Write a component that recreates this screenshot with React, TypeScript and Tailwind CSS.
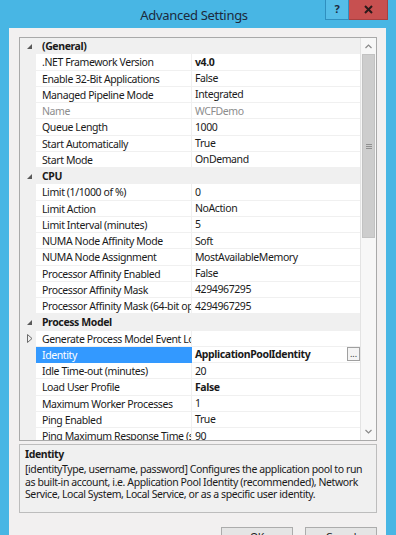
import React from "react";

type Row =
  | { kind: "cat"; name: string }
  | {
      kind: "prop";
      name: string;
      value: string;
      bold?: boolean;
      grey?: boolean;
      selected?: boolean;
      expandable?: boolean;
      button?: boolean;
    };

const rows: Row[] = [
  { kind: "cat", name: "(General)" },
  { kind: "prop", name: ".NET Framework Version", value: "v4.0", bold: true },
  { kind: "prop", name: "Enable 32-Bit Applications", value: "False" },
  { kind: "prop", name: "Managed Pipeline Mode", value: "Integrated" },
  { kind: "prop", name: "Name", value: "WCFDemo", grey: true },
  { kind: "prop", name: "Queue Length", value: "1000" },
  { kind: "prop", name: "Start Automatically", value: "True" },
  { kind: "prop", name: "Start Mode", value: "OnDemand" },
  { kind: "cat", name: "CPU" },
  { kind: "prop", name: "Limit (1/1000 of %)", value: "0" },
  { kind: "prop", name: "Limit Action", value: "NoAction" },
  { kind: "prop", name: "Limit Interval (minutes)", value: "5" },
  { kind: "prop", name: "NUMA Node Affinity Mode", value: "Soft" },
  { kind: "prop", name: "NUMA Node Assignment", value: "MostAvailableMemory" },
  { kind: "prop", name: "Processor Affinity Enabled", value: "False" },
  { kind: "prop", name: "Processor Affinity Mask", value: "4294967295" },
  { kind: "prop", name: "Processor Affinity Mask (64-bit option)", value: "4294967295" },
  { kind: "cat", name: "Process Model" },
  { kind: "prop", name: "Generate Process Model Event Log Entry", value: "", expandable: true },
  { kind: "prop", name: "Identity", value: "ApplicationPoolIdentity", bold: true, selected: true, button: true },
  { kind: "prop", name: "Idle Time-out (minutes)", value: "20" },
  { kind: "prop", name: "Load User Profile", value: "False", bold: true },
  { kind: "prop", name: "Maximum Worker Processes", value: "1" },
  { kind: "prop", name: "Ping Enabled", value: "True" },
  { kind: "prop", name: "Ping Maximum Response Time (seconds)", value: "90" },
];

function CollapseGlyph() {
  return (
    <svg width="7" height="7" viewBox="0 0 7 7">
      <path d="M6 1 L6 6 L1 6 Z" fill="#595959" />
    </svg>
  );
}

function ExpandGlyph() {
  return (
    <svg width="6" height="9" viewBox="0 0 6 9">
      <path d="M0.5 0.5 L5 4.5 L0.5 8.5 Z" fill="none" stroke="#6a6a6a" strokeWidth="1" />
    </svg>
  );
}

function GridRow({ row }: { row: Row }) {
  if (row.kind === "cat") {
    return (
      <div className="flex h-[16.25px] shrink-0 bg-[#f0f0f0]">
        <div className="w-[16px] shrink-0 flex items-center justify-end pr-[3px]">
          <CollapseGlyph />
        </div>
        <div className="pl-[6px] font-bold text-[#1a1a1a] leading-[16px] whitespace-nowrap">{row.name}</div>
      </div>
    );
  }
  return (
    <div className="flex h-[16.25px] shrink-0">
      <div className="w-[16px] shrink-0 bg-[#f0f0f0] flex items-center justify-end pr-[3px]">
        {row.expandable ? <ExpandGlyph /> : null}
      </div>
      <div
        className={
          "w-[156px] shrink-0 overflow-hidden whitespace-nowrap pl-[6px] leading-[16px] border-r border-b " +
          (row.selected
            ? "bg-[#3399ff] text-white border-[#3399ff]"
            : row.grey
            ? "text-[#8d8d8d] border-[#f0f0f0]"
            : "text-[#1a1a1a] border-[#f0f0f0]")
        }
      >
        {row.name}
      </div>
      <div
        className={
          "flex-1 min-w-0 flex items-center border-b border-[#f0f0f0] pl-[3px] whitespace-nowrap overflow-hidden " +
          (row.grey ? "text-[#8d8d8d] " : "text-[#1a1a1a] ") +
          (row.bold ? "font-bold" : "")
        }
      >
        <span className="flex-1 leading-[16px]">{row.value}</span>
        {row.button ? (
          <span className="w-[13px] h-[14px] border border-[#a0a0a0] bg-[#f4f4f4] flex items-end justify-center text-[9px] leading-[9px] font-normal text-[#333] pb-[2px] tracking-normal">
            ...
          </span>
        ) : null}
      </div>
    </div>
  );
}

export default function App() {
  return (
    <div
      className="w-[396px] h-[535px] overflow-hidden bg-[#48b6e4] flex flex-col text-[10.5px] tracking-[-0.4px]"
      style={{ fontFamily: '"Noto Sans", "Liberation Sans", sans-serif' }}
    >
      {/* title bar */}
      <div className="h-[28px] shrink-0 flex items-start pr-[8px]">
        <div className="w-[63px] shrink-0" />
        <div className="flex-1 text-center text-[13px] tracking-[-0.3px] text-[#1c2a3c] pt-[5px] leading-[20px]">
          Advanced Settings
        </div>
        <div className="w-[24px] h-[20px] flex items-center justify-center border border-t-0 border-[#2f8fbf] bg-[#55bde8] text-[11px] font-bold text-[#1c2a3c] tracking-normal">
          ?
        </div>
        <div className="w-[39px] h-[20px] flex items-center justify-center bg-[#c75050] border-b border-r border-[#a84040]">
          <svg width="9" height="9" viewBox="0 0 9 9">
            <path d="M1 1 L8 8 M8 1 L1 8" stroke="#2a1a1a" strokeWidth="2" />
          </svg>
        </div>
      </div>

      {/* client area */}
      <div className="flex-1 flex ml-[9px] mr-[10px]">
        <div className="flex-1 bg-[#f2f0f0] flex flex-col pt-[9px] pl-[10px] pr-[9px]">
          {/* property grid */}
          <div className="h-[404px] shrink-0 border border-[#a9a9a9] bg-white flex overflow-hidden">
            <div className="flex-1 min-w-0 flex flex-col overflow-hidden">
              {rows.map((r, i) => (
                <GridRow key={i} row={r} />
              ))}
            </div>
            {/* scrollbar */}
            <div className="w-[16px] shrink-0 border-l border-[#e3e3e3] bg-[#f7f7f7] flex flex-col">
              <div className="h-[16px] flex items-center justify-center">
                <svg width="7" height="5" viewBox="0 0 7 5">
                  <path d="M0.5 4 L3.5 1 L6.5 4" fill="none" stroke="#8a8a8a" strokeWidth="1.2" />
                </svg>
              </div>
              <div className="h-[184px] mx-[1px] bg-[#cdcdcd] border border-[#c2c2c2] flex items-center justify-center">
                <div className="flex flex-col gap-[1px]">
                  <div className="w-[6px] h-[1px] bg-[#909090]" />
                  <div className="w-[6px] h-[1px] bg-[#909090]" />
                  <div className="w-[6px] h-[1px] bg-[#909090]" />
                </div>
              </div>
              <div className="flex-1" />
              <div className="h-[18px] flex items-center justify-center">
                <svg width="7" height="5" viewBox="0 0 7 5">
                  <path d="M0.5 1 L3.5 4 L6.5 1" fill="none" stroke="#8a8a8a" strokeWidth="1.2" />
                </svg>
              </div>
            </div>
          </div>

          {/* description pane */}
          <div className="h-[69px] shrink-0 mt-[3px] border border-[#bdbdbd] bg-[#f0f0f0] px-[5px] pt-[2px] text-[#1a1a1a] leading-[12.5px]">
            <div className="font-bold leading-[15px]">Identity</div>
            <div className="mt-[1px]">
              [identityType, username, password] Configures the application pool to run as built-in account, i.e.
              Application Pool Identity (recommended), Network Service, Local System, Local Service, or as a specific
              user identity.
            </div>
          </div>

          {/* buttons */}
          <div className="flex justify-end gap-[12px] mt-[14px]">
            <div className="w-[72px] h-[22px] border border-[#acacac] bg-[#e5e5e5] flex items-center justify-center text-[#1a1a1a]">
              OK
            </div>
            <div className="w-[72px] h-[22px] border border-[#acacac] bg-[#e5e5e5] flex items-center justify-center text-[#1a1a1a]">
              Cancel
            </div>
          </div>
        </div>
      </div>
    </div>
  );
}
